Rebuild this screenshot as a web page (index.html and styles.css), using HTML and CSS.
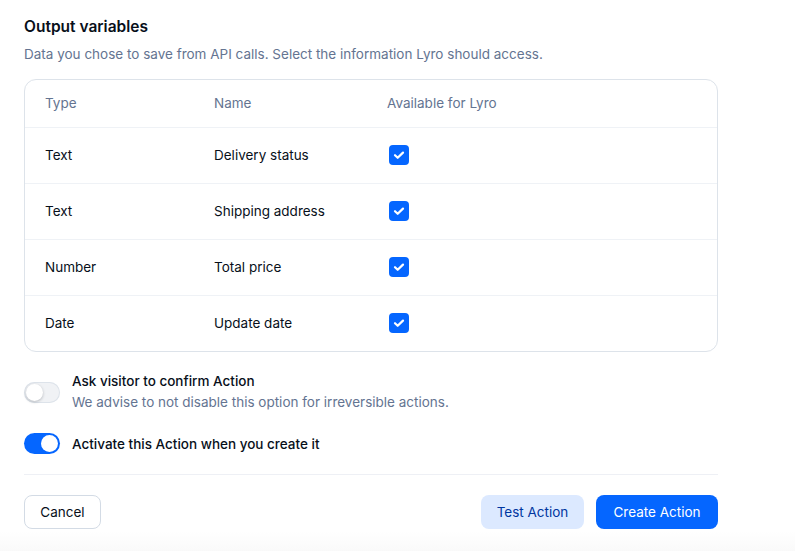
FILE: index.html
```html
<!DOCTYPE html>
<html>
<head>
<meta charset="utf-8">
<link rel="stylesheet" href="styles.css">
</head>
<body>
<div class="page">
  <h2 class="title">Output variables</h2>
  <p class="subtitle">Data you chose to save from API calls. Select the information Lyro should access.</p>

  <div class="table">
    <div class="row head">
      <div>Type</div><div>Name</div><div>Available for Lyro</div>
    </div>
    <div class="row">
      <div>Text</div><div>Delivery status</div>
      <div><span class="check"><svg viewBox="0 0 20 20" width="20" height="20"><path d="M6 10.2l2.7 2.6L14 7.6" fill="none" stroke="#fff" stroke-width="2.2" stroke-linecap="round" stroke-linejoin="round"/></svg></span></div>
    </div>
    <div class="row">
      <div>Text</div><div>Shipping address</div>
      <div><span class="check"><svg viewBox="0 0 20 20" width="20" height="20"><path d="M6 10.2l2.7 2.6L14 7.6" fill="none" stroke="#fff" stroke-width="2.2" stroke-linecap="round" stroke-linejoin="round"/></svg></span></div>
    </div>
    <div class="row">
      <div>Number</div><div>Total price</div>
      <div><span class="check"><svg viewBox="0 0 20 20" width="20" height="20"><path d="M6 10.2l2.7 2.6L14 7.6" fill="none" stroke="#fff" stroke-width="2.2" stroke-linecap="round" stroke-linejoin="round"/></svg></span></div>
    </div>
    <div class="row">
      <div>Date</div><div>Update date</div>
      <div><span class="check"><svg viewBox="0 0 20 20" width="20" height="20"><path d="M6 10.2l2.7 2.6L14 7.6" fill="none" stroke="#fff" stroke-width="2.2" stroke-linecap="round" stroke-linejoin="round"/></svg></span></div>
    </div>
  </div>

  <div class="option first">
    <span class="toggle"><span class="knob"></span></span>
    <div class="opt-text">
      <div class="opt-label">Ask visitor to confirm Action</div>
      <div class="opt-desc">We advise to not disable this option for irreversible actions.</div>
    </div>
  </div>
  <div class="option">
    <span class="toggle on"><span class="knob"></span></span>
    <div class="opt-text">
      <div class="opt-label">Activate this Action when you create it</div>
    </div>
  </div>

  <div class="divider"></div>

  <div class="actions">
    <button class="btn cancel">Cancel</button>
    <div class="right">
      <button class="btn test">Test Action</button>
      <button class="btn create">Create Action</button>
    </div>
  </div>
</div>
<div class="shade"></div>
</body>
</html>
```
FILE: styles.css
```css
html, body {
  margin: 0;
  padding: 0;
  background: #ffffff;
}
body {
  font-family: "Inter", "Lato", sans-serif;
  color: #080f1a;
  width: 795px;
  height: 551px;
  overflow: hidden;
}
.page {
  width: 694px;
  margin-left: 24px;
  padding-top: 15px;
}
.title {
  margin: 0;
  font-size: 15.5px;
  line-height: 24px;
  font-weight: 600;
  color: #080f1a;
}
.subtitle {
  margin: 5px 0 0;
  font-size: 13.5px;
  line-height: 20px;
  color: #647491;
}
.table {
  margin-top: 15px;
  border: 1px solid #dde3ea;
  border-radius: 12px;
}
.row {
  display: grid;
  grid-template-columns: 169px 173px 1fr;
  align-items: center;
  padding-left: 20px;
  padding-bottom: 2px;
  height: 53px;
  font-size: 13.5px;
  color: #080f1a;
  border-top: 1px solid #eff2f6;
}
.row.head {
  height: 45px;
  border-top: none;
  color: #647491;
}
.check {
  display: block;
  width: 20px;
  height: 20px;
  margin-left: 2px;
  border-radius: 4px;
  background: #0566ff;
}
.check svg { display: block; }
.option {
  display: flex;
  align-items: center;
  gap: 12px;
  margin-top: 19px;
}
.option.first { margin-top: 19px; }
.toggle {
  position: relative;
  flex: none;
  width: 36px;
  height: 21px;
  border-radius: 11px;
  background: #f0f2f5;
  box-shadow: inset 0 0 0 1px #dde3ea;
}
.toggle .knob {
  position: absolute;
  top: 2px;
  left: 2px;
  width: 17px;
  height: 17px;
  border-radius: 50%;
  background: #fff;
  box-shadow: 0 1px 3px rgba(8, 15, 26, 0.25);
}
.toggle.on {
  background: #0566ff;
  box-shadow: none;
}
.toggle.on .knob {
  left: 17px;
  box-shadow: none;
}
.opt-label {
  font-size: 13.5px;
  line-height: 20px;
  font-weight: 500;
  color: #080f1a;
}
.opt-desc {
  font-size: 13.5px;
  line-height: 23px;
  color: #647491;
}
.divider {
  margin-top: 20px;
  height: 1px;
  background: #eef0f5;
}
.actions {
  display: flex;
  justify-content: space-between;
  margin-top: 20px;
}
.right {
  display: flex;
  gap: 12px;
}
.btn {
  font-family: inherit;
  font-size: 13.5px;
  height: 34px;
  border-radius: 8px;
  padding: 0 14px;
  border: 1px solid transparent;
  cursor: pointer;
}
.btn.cancel {
  width: 77px;
  background: #fff;
  border-color: #d3dbe5;
  color: #080f1a;
}
.btn.test {
  width: 103px;
  background: #dce9ff;
  color: #0036a0;
}
.btn.create {
  width: 122px;
  background: #0566ff;
  color: #fff;
}
.shade {
  margin-top: 2px;
  height: 30px;
  background: linear-gradient(#ffffff, #f7f7f7);
}
```
